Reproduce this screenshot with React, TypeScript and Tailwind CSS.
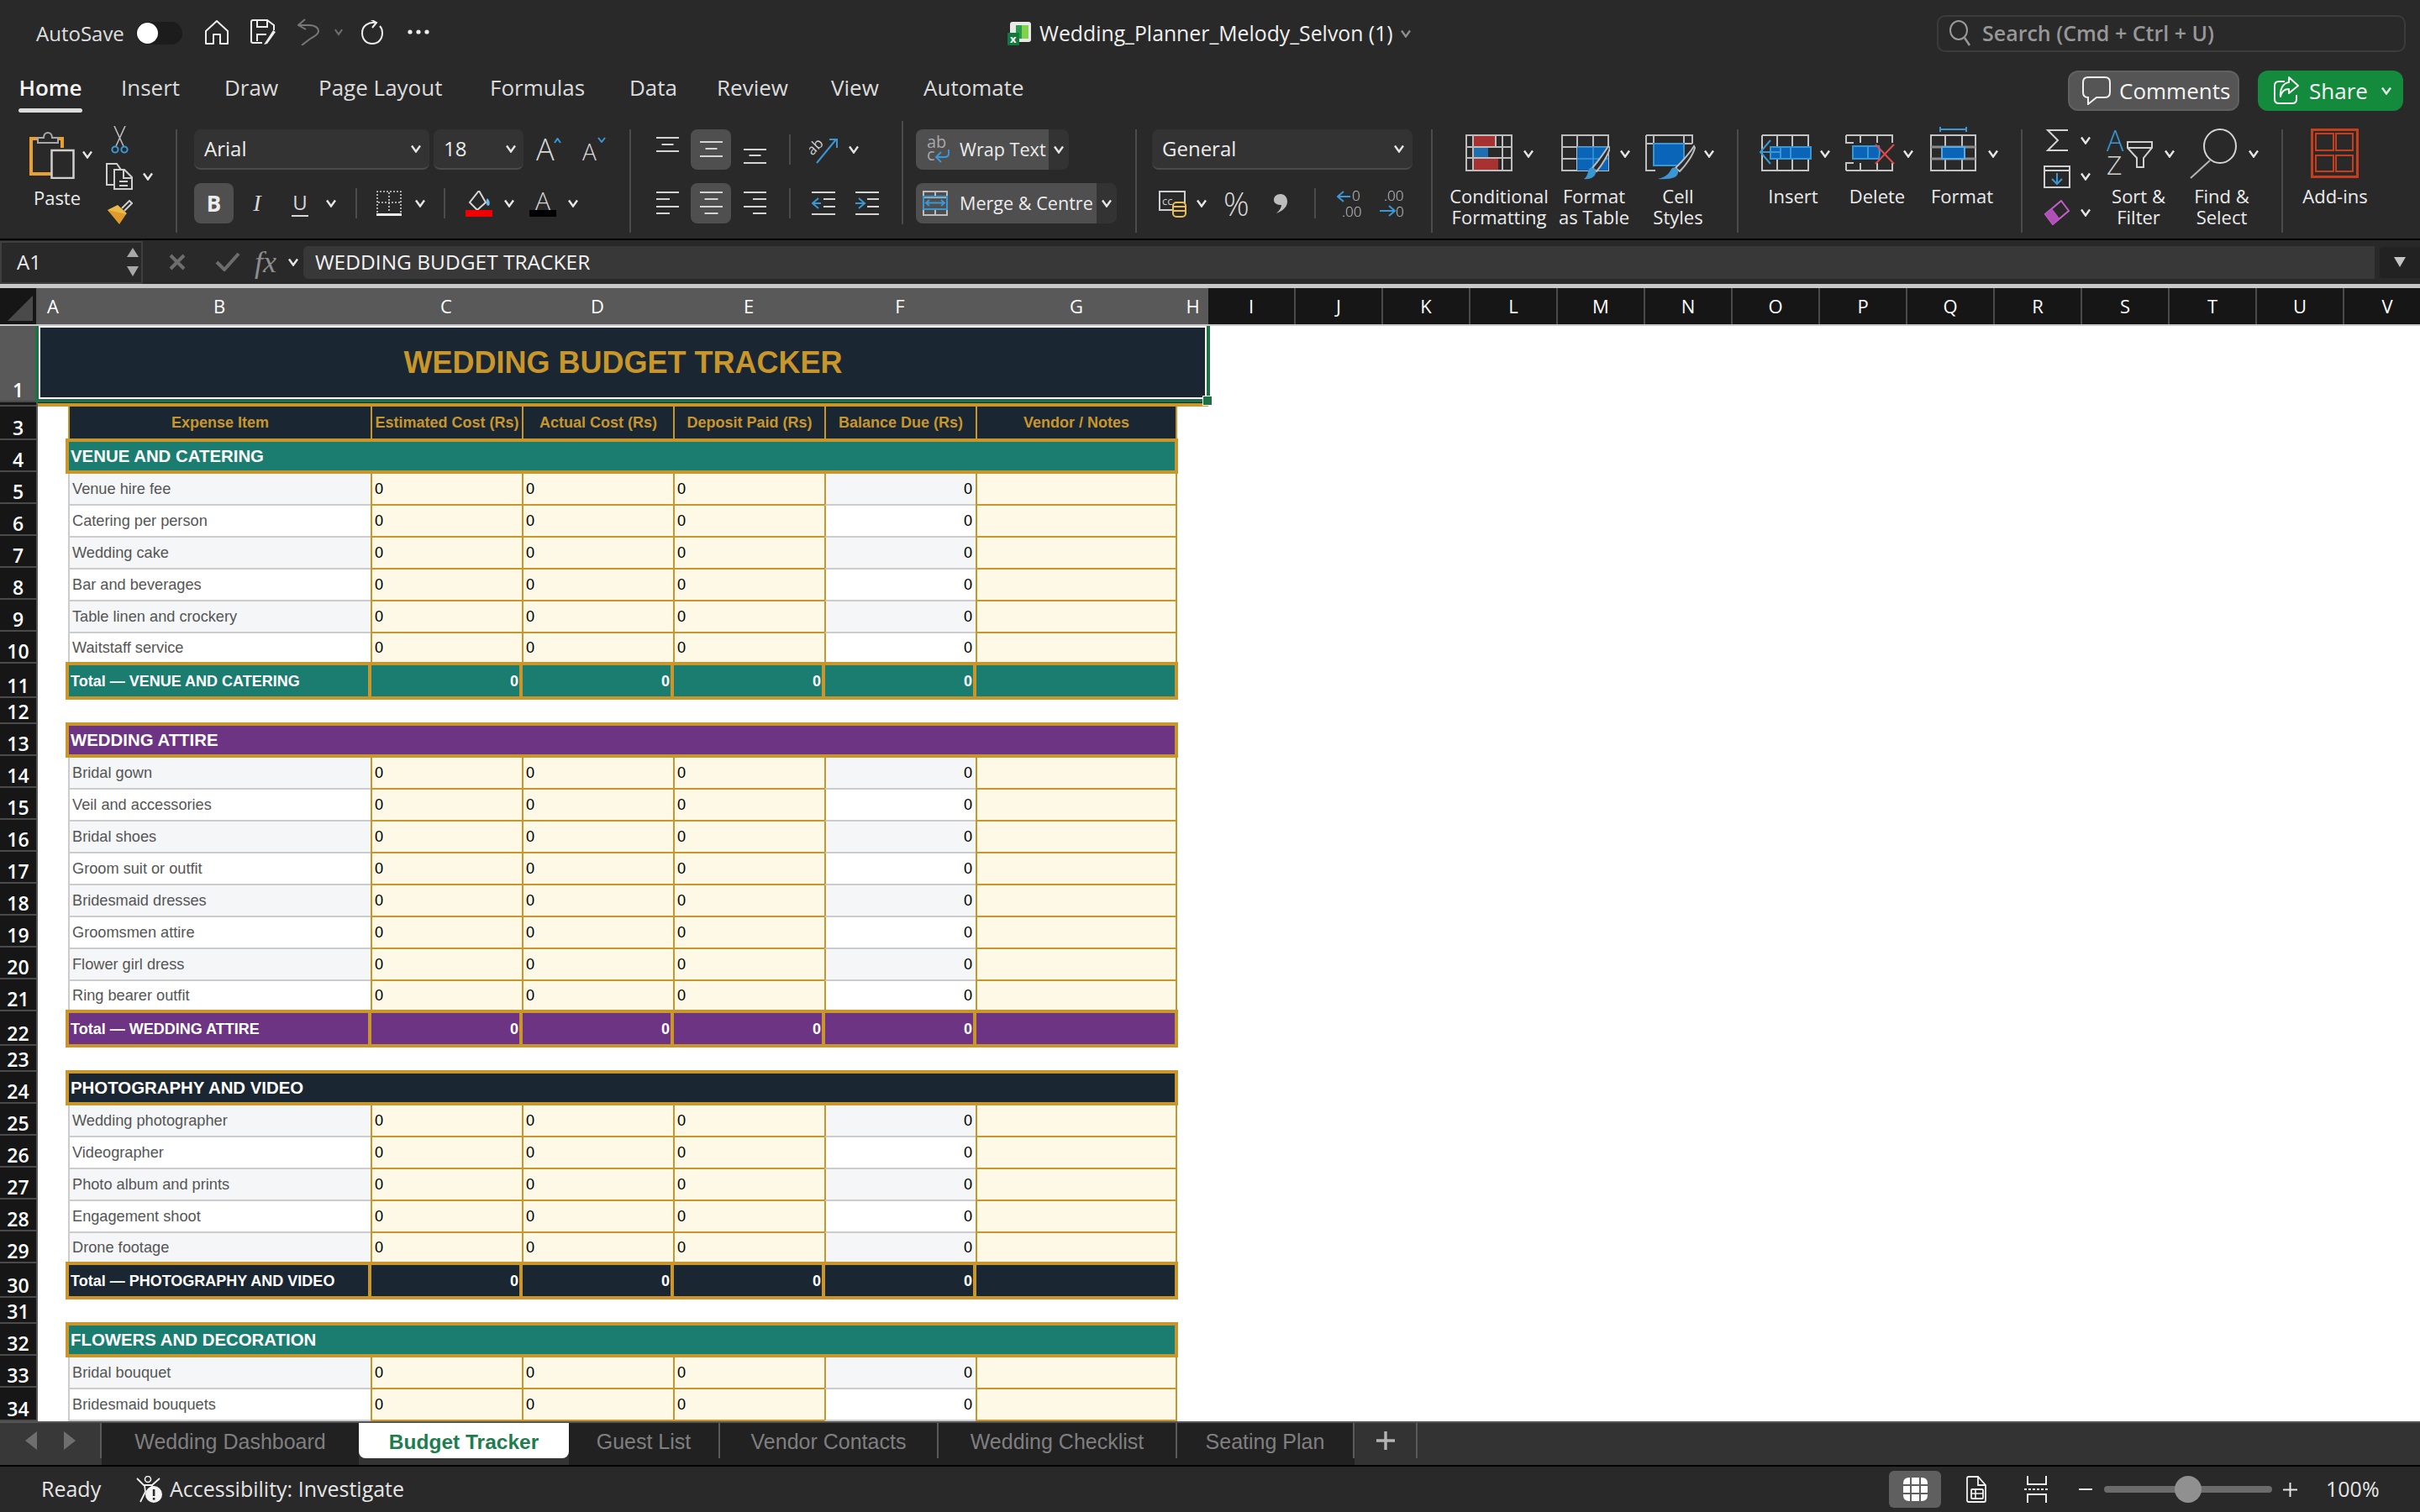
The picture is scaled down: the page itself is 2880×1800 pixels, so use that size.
import React from "react";

function Chev({ className = "", color = "#e6e6e6" }: { className?: string; color?: string }) {
  return (
    <svg width="12" height="10" viewBox="0 0 12 10" className={"shrink-0 " + className}>
      <path d="M1 1.5 L6 8.5 L11 1.5" fill="none" stroke={color} strokeWidth="2.4" />
    </svg>
  );
}

function Sep({ className = "" }: { className?: string }) {
  return <div className={"w-[2px] shrink-0 bg-[#4b4b4b] " + className} />;
}

function SmallSep({ className = "" }: { className?: string }) {
  return <div className={"w-[2px] h-[36px] shrink-0 bg-[#4b4b4b] " + className} />;
}

function Lines({ ys, lens, align }: { ys: number[]; lens: number[]; align: "l" | "c" | "r" }) {
  return (
    <svg width="27" height="48" viewBox="0 0 27 48" className="shrink-0">
      {ys.map((y, i) => {
        const x = align === "l" ? 0 : align === "r" ? 27 - lens[i] : (27 - lens[i]) / 2;
        return <rect key={i} x={x} y={y} width={lens[i]} height="2" fill="#d4d4d4" />;
      })}
    </svg>
  );
}

function Big({
  width,
  margin,
  offset,
  icon,
  chev,
  lines,
}: {
  width: string;
  margin: string;
  offset: string;
  icon: React.ReactNode;
  chev?: string;
  lines: string[];
}) {
  return (
    <div className={"shrink-0 flex flex-col " + width + " " + margin}>
      <div className={"flex items-center h-[66px] mt-[6px] " + offset}>
        {icon}
        {chev ? <Chev className={chev} /> : null}
      </div>
      <div className="mt-[5px] text-center text-[22px] leading-[25px] text-[#ececec]">
        {lines.map((l) => (
          <div key={l}>{l}</div>
        ))}
      </div>
    </div>
  );
}

function Icon({ w, children, h = 66 }: { w: number; h?: number; children: React.ReactNode }) {
  return (
    <svg width={w} height={h} viewBox={`0 0 ${w} ${h}`} className="shrink-0" fill="none">
      {children}
    </svg>
  );
}

const ic = {
  cf: (
    <Icon w={56}>
      <rect x="9" y="11" width="27" height="14" fill="#a83232" />
      <rect x="9" y="25" width="18" height="13" fill="#1f6fb0" />
      <rect x="9" y="38" width="30" height="15" fill="#a83232" />
      <path d="M1 11H55V53H1ZM9 11V53M36 11V25M44 11V53M1 25H55M1 38H55" stroke="#bdbdbd" strokeWidth="2" />
    </Icon>
  ),
  fat: (
    <Icon w={58}>
      <path d="M1 11H56V53H1ZM19 11V53M38 11V53M1 25H56M1 39H56" stroke="#bdbdbd" strokeWidth="2" />
      <rect x="19" y="25" width="37" height="28" fill="#0a64b8" />
      <path d="M19 25H56M38 25V53M19 39H56" stroke="#3b97d3" strokeWidth="1.5" />
      <path d="M56 24 C50 34 42 44 37 50 L42 54 C49 46 56 34 58 26 Z" fill="#2b2b2b" stroke="#bdbdbd" strokeWidth="2" />
      <path d="M34 50 C38 48 42 52 41 56 C40 61 34 64 27 63 C32 60 31 54 34 50 Z" fill="#3b97d3" />
    </Icon>
  ),
  cs: (
    <Icon w={60}>
      <path d="M1 11H56V21M1 11V53H12M1 21H56M10 11V21M46 11V21" stroke="#bdbdbd" strokeWidth="2" />
      <rect x="10" y="21" width="36" height="26" fill="#0a64b8" stroke="#3b97d3" strokeWidth="2" />
      <path d="M58 24 C52 34 42 44 36 50 L41 54 C49 46 57 34 59 26 Z" fill="#2b2b2b" stroke="#bdbdbd" strokeWidth="2" />
      <path d="M32 50 C36 48 40 52 39 56 C38 61 32 64 15 63 C28 60 29 54 32 50 Z" fill="#3b97d3" />
    </Icon>
  ),
  insert: (
    <Icon w={63}>
      <path d="M4 11H59V24M4 11V53H59V39M22 11V53M40 11V53" stroke="#c4c4c4" strokeWidth="2" />
      <rect x="14" y="25" width="48" height="14" fill="#0a64b8" stroke="#3b97d3" strokeWidth="2" />
      <path d="M38 25V39M26 25V39" stroke="#3b97d3" strokeWidth="2" />
      <path d="M14 17 L2 31 L14 45M2 31H27" stroke="#3b97d3" strokeWidth="2" />
    </Icon>
  ),
  del: (
    <Icon w={59}>
      <path d="M1 11H56V20M1 11V20H10M1 53V44H10M1 53H56V44M18 11V20M38 11V20M18 44V53M38 44V53" stroke="#c4c4c4" strokeWidth="2" />
      <path d="M9 24H40L41 31L40 39H9Z" fill="#0a64b8" stroke="#3b97d3" strokeWidth="2" />
      <path d="M27 24V39" stroke="#3b97d3" strokeWidth="2" />
      <path d="M36 22 L58 45 M58 22 L36 45" stroke="#e04b4b" strokeWidth="2" />
    </Icon>
  ),
  format: (
    <Icon w={55}>
      <path d="M12 4H43M12 1V7M43 1V7" stroke="#3b97d3" strokeWidth="2" />
      <path d="M1 11H54V53H1ZM18 11V53M38 11V53" stroke="#c4c4c4" strokeWidth="2" />
      <path d="M1 25H54M1 39H54" stroke="#8a8a8a" strokeWidth="3" />
      <rect x="14" y="25" width="27" height="14" fill="#0a64b8" stroke="#5aa9e0" strokeWidth="2" />
    </Icon>
  ),
  sort: (
    <Icon w={55}>
      <text x="0" y="30" fontSize="34" fontFamily="'Open Sans',sans-serif" fontWeight="300" fill="#3b97d3">A</text>
      <text x="0" y="58" fontSize="32" fontFamily="'Open Sans',sans-serif" fontWeight="300" fill="#d0d0d0">Z</text>
      <path d="M25 19H54V26L44 38V49H36V38L25 26Z" stroke="#d0d0d0" strokeWidth="2" />
      <path d="M25 26H54" stroke="#d0d0d0" strokeWidth="2" />
    </Icon>
  ),
  find: (
    <Icon w={57}>
      <ellipse cx="37" cy="24" rx="19" ry="20" stroke="#d4d4d4" strokeWidth="2" />
      <path d="M25 41 L2 62" stroke="#b5b5b5" strokeWidth="2" />
    </Icon>
  ),
  addins: (
    <Icon w={57}>
      <rect x="1.5" y="4.5" width="54" height="56" stroke="#c73e1d" strokeWidth="3" />
      <path d="M6 9H27V29H6ZM30 9H50V29H30ZM6 35H27V54H6ZM30 35H50V54H30Z" stroke="#c73e1d" strokeWidth="2" />
    </Icon>
  ),
};

const rowHeads: [string, string][] = [
  ["1", "h-[91px]"],
  ["", "h-[5px]"],
  ["3", "h-[40px]"],
  ["4", "h-[38px]"],
  ["5", "h-[38px]"],
  ["6", "h-[38px]"],
  ["7", "h-[38px]"],
  ["8", "h-[38px]"],
  ["9", "h-[38px]"],
  ["10", "h-[38px]"],
  ["11", "h-[41px]"],
  ["12", "h-[31px]"],
  ["13", "h-[38px]"],
  ["14", "h-[38px]"],
  ["15", "h-[38px]"],
  ["16", "h-[38px]"],
  ["17", "h-[38px]"],
  ["18", "h-[38px]"],
  ["19", "h-[38px]"],
  ["20", "h-[38px]"],
  ["21", "h-[38px]"],
  ["22", "h-[41px]"],
  ["23", "h-[31px]"],
  ["24", "h-[38px]"],
  ["25", "h-[38px]"],
  ["26", "h-[38px]"],
  ["27", "h-[38px]"],
  ["28", "h-[38px]"],
  ["29", "h-[38px]"],
  ["30", "h-[41px]"],
  ["31", "h-[31px]"],
  ["32", "h-[38px]"],
  ["33", "h-[38px]"],
  ["34", "h-[40px]"],
];

const columns: [string, string][] = [
  ["A", "w-[36px]"],
  ["B", "w-[360px]"],
  ["C", "w-[180px]"],
  ["D", "w-[180px]"],
  ["E", "w-[180px]"],
  ["F", "w-[180px]"],
  ["G", "w-[240px]"],
  ["H", "w-[37px]"],
];

const grayCols = ["I", "J", "K", "L", "M", "N", "O", "P", "Q", "R", "S", "T", "U", "V"];

const GRID = "grid grid-cols-[360px_180px_180px_180px_180px_240px] ml-[36px] w-[1320px]";

function DataRow({ label, alt, last }: { label: string; alt: boolean; last?: boolean }) {
  const bg = alt ? "bg-[#f4f6f7]" : "bg-white";
  const h = last ? "h-[34px]" : "h-[38px]";
  const bGray = last ? "" : "border-b-2 border-b-[#cccccc]";
  const bGold = last ? "" : "border-b-2 border-b-[#c8962a]";
  const num = "flex items-center pl-[3px] pt-[1px] bg-[#fef9e7] border-l-2 border-l-[#c8962a] text-black " + bGold;
  return (
    <div className={GRID + " " + h + " text-[18.2px] font-['Liberation_Sans',Arial,sans-serif]"}>
      <div className={"flex items-center pl-[3px] pt-[1px] border-l-2 border-l-[#cccccc] text-[#555555] " + bg + " " + bGray}>{label}</div>
      <div className={num}>0</div>
      <div className={num}>0</div>
      <div className={num}>0</div>
      <div className={"flex items-center justify-end pr-[4px] pt-[1px] border-l-2 border-l-[#c8962a] text-black " + bg + " " + bGray}>0</div>
      <div className={"bg-[#fef9e7] border-l-2 border-l-[#c8962a] border-r-2 border-r-[#c8962a] " + bGold} />
    </div>
  );
}

function Section({
  title,
  bg,
  items,
  gap,
  cut,
}: {
  title: string;
  bg: string;
  items: string[];
  gap?: boolean;
  cut?: boolean;
}) {
  return (
    <div className={gap ? "mt-[27px]" : ""}>
      <div
        className={
          "ml-[33px] w-[1324px] h-[42px] border-4 border-[#c8962a] flex items-center pl-[2px] text-white font-bold text-[20.4px] font-['Liberation_Sans',Arial,sans-serif] " +
          bg
        }
      >
        {title}
      </div>
      {items.map((it, i) => (
        <DataRow key={it} label={it} alt={i % 2 === 0} last={!cut && i === items.length - 1} />
      ))}
      {cut ? null : (
        <div className="ml-[33px] w-[1324px] h-[45px] grid grid-cols-[364px_180px_180px_180px_180px_240px] text-white font-bold text-[18px] font-['Liberation_Sans',Arial,sans-serif]">
          <div className={"flex items-center pl-[2px] pt-[1px] border-y-4 border-x-4 border-[#c8962a] " + bg}>Total — {title}</div>
          {[0, 1, 2, 3].map((k) => (
            <div key={k} className={"flex items-center justify-end pr-[1px] pt-[1px] border-y-4 border-r-4 border-[#c8962a] " + bg}>
              0
            </div>
          ))}
          <div className={"border-y-4 border-r-4 border-[#c8962a] " + bg} />
        </div>
      )}
    </div>
  );
}

export default function App() {
  return (
    <div className="w-[2880px] h-[1800px] overflow-hidden flex flex-col bg-[#292929] text-[#ececec] font-['Open_Sans',sans-serif]">
      {/* title bar */}
      <div className="h-[76px] shrink-0 flex items-center relative">
        <span className="ml-[43px] mt-[3px] text-[24px] w-[99px] whitespace-nowrap text-[#e0e0e0]">AutoSave</span>
        <div className="ml-[20px] mt-[2px] w-[55px] h-[27px] rounded-full bg-[#1c1c1c] flex items-center pl-[1px] shrink-0">
          <div className="w-[25px] h-[25px] rounded-full bg-white" />
        </div>
        <svg width="28" height="29" viewBox="0 0 28 29" fill="none" className="ml-[27px] shrink-0">
          <path d="M1 13 L14 1 L27 13 V28 H18 V17 H10 V28 H1 Z" stroke="#eeeeee" strokeWidth="2" strokeLinejoin="round" />
        </svg>
        <svg width="31" height="30" viewBox="0 0 31 30" fill="none" className="ml-[26px] shrink-0">
          <path d="M3 1 H20 L28 7 V13 M14 28 H3 Q1 28 1 26 V3 Q1 1 3 1 M8 1 V9 H20 V1" stroke="#eeeeee" strokeWidth="2" />
          <path d="M8 26 V18 H19" stroke="#eeeeee" strokeWidth="2" />
          <path d="M18 27 L16 30 L20 29 L30 15 L27 13 Z" fill="#eeeeee" />
        </svg>
        <svg width="26" height="32" viewBox="0 0 26 32" fill="none" className="ml-[25px] shrink-0">
          <path d="M9 1 L1 8 L10 13 M1 8 H14 C22 8 25 12 25 15 C25 20 18 22 14 25 L5 32" stroke="#787878" strokeWidth="2" />
        </svg>
        <Chev className="ml-[18px] w-[10px]" color="#6f6f6f" />
        <svg width="27" height="29" viewBox="0 0 27 29" fill="none" className="ml-[22px] shrink-0">
          <path d="M17 3 C8 2 1 7 1 15 C1 23 6 28 13 28 C20 28 25 23 25 15 C25 12 24 9 22 7" stroke="#eeeeee" strokeWidth="2" />
          <path d="M11 -1 L18 3 L13 9" stroke="#eeeeee" strokeWidth="2" />
        </svg>
        <svg width="26" height="6" viewBox="0 0 26 6" className="ml-[28px] shrink-0">
          <circle cx="3" cy="3" r="2.6" fill="#eeeeee" />
          <circle cx="13" cy="3" r="2.6" fill="#eeeeee" />
          <circle cx="23" cy="3" r="2.6" fill="#eeeeee" />
        </svg>
        {/* centre title */}
        <svg width="29" height="28" viewBox="0 0 29 28" className="ml-[688px] mt-[4px] shrink-0">
          <rect x="3" y="0" width="25" height="24" rx="3" fill="#e8e8e8" />
          <rect x="10" y="4" width="15" height="16" fill="#2a9a4a" />
          <rect x="17" y="4" width="8" height="16" fill="#7fd24a" />
          <rect x="0" y="13" width="14" height="15" rx="1" fill="#0f7a3c" />
          <text x="3" y="25" fontSize="13" fontWeight="700" fill="#ffffff" fontFamily="'Open Sans',sans-serif">x</text>
        </svg>
        <span className="ml-[9px] mt-[3px] text-[24.8px] whitespace-nowrap text-[#f0f0f0]">Wedding_Planner_Melody_Selvon (1)</span>
        <Chev className="ml-[9px] mt-[3px]" color="#8c8c8c" />
        <div className="ml-auto mr-[17px] mt-[4px] w-[558px] h-[44px] rounded-[10px] border-2 border-[#3b3b3b] flex items-center shrink-0">
          <svg width="28" height="32" viewBox="0 0 28 32" fill="none" className="ml-[12px] shrink-0">
            <ellipse cx="12" cy="12" rx="10" ry="11" stroke="#9a9a9a" strokeWidth="2" />
            <path d="M19 21 L25 30" stroke="#9a9a9a" strokeWidth="2.4" />
          </svg>
          <span className="ml-[12px] text-[25px] font-semibold text-[#979797] whitespace-nowrap">Search (Cmd + Ctrl + U)</span>
        </div>
      </div>

      {/* menu row */}
      <div className="h-[68px] shrink-0 flex items-start relative text-[26px] text-[#dcdcdc]">
        <div className="ml-[22px] mt-[9px] w-[76px] flex flex-col items-center">
          <span className="font-semibold text-[#f4f4f4]">Home</span>
          <div className="w-[76px] h-[5px] rounded-full bg-[#dcdcdc] mt-[5px]" />
        </div>
        <span className="ml-[46px] mt-[9px] w-[76px]">Insert</span>
        <span className="ml-[47px] mt-[9px] w-[68px]">Draw</span>
        <span className="ml-[44px] mt-[9px] w-[156px] whitespace-nowrap">Page Layout</span>
        <span className="ml-[48px] mt-[9px] w-[120px]">Formulas</span>
        <span className="ml-[46px] mt-[9px] w-[60px]">Data</span>
        <span className="ml-[44px] mt-[9px] w-[92px]">Review</span>
        <span className="ml-[44px] mt-[9px] w-[64px]">View</span>
        <span className="ml-[46px] mt-[9px] w-[124px]">Automate</span>
        <div className="ml-[1238px] mt-[8px] w-[204px] h-[48px] rounded-[12px] bg-[#555555] border-2 border-[#606060] flex items-center shrink-0">
          <svg width="34" height="34" viewBox="0 0 34 34" fill="none" className="ml-[15px] shrink-0">
            <path d="M7 1 H27 Q33 1 33 7 V19 Q33 25 27 25 H17 L7 33 V25 Q1 25 1 19 V7 Q1 1 7 1 Z" stroke="#f0f0f0" strokeWidth="2" />
          </svg>
          <span className="ml-[10px] text-[#f4f4f4]">Comments</span>
        </div>
        <div className="ml-[22px] mt-[8px] w-[173px] h-[48px] rounded-[12px] bg-[#148a3c] flex items-center shrink-0">
          <svg width="30" height="34" viewBox="0 0 30 34" fill="none" className="ml-[19px] shrink-0">
            <path d="M13 6 H6 Q1 6 1 11 V27 Q1 32 6 32 H22 Q27 32 27 27 V22" stroke="#f4f4f4" strokeWidth="2" />
            <path d="M18 1 L29 11 L18 20 V15 C12 15 9 19 8 24 C7 15 11 8 18 7 Z" stroke="#f4f4f4" strokeWidth="2" strokeLinejoin="round" />
          </svg>
          <span className="ml-[12px] text-[#f8f8f8]">Share</span>
          <Chev className="ml-[14px] w-[16px]" />
        </div>
      </div>

      {/* ribbon */}
      <div className="h-[140px] shrink-0 flex items-start">
        {/* clipboard */}
        <div className="w-[209px] shrink-0 flex">
          <div className="w-[126px] shrink-0 flex flex-col">
            <div className="flex items-center mt-[10px] ml-[35px] h-[59px]">
              <svg width="54" height="59" viewBox="0 0 54 59" fill="none" className="shrink-0">
                <path d="M9 11 H2 V53 H26 M35 11 H39 V22" stroke="#e8a030" strokeWidth="4" />
                <path d="M10 16 V10 H17 C17 2 27 2 27 10 H34 V16 Z" stroke="#a8a8a8" strokeWidth="2" />
                <rect x="26.5" y="25" width="26" height="33" stroke="#cfcfcf" strokeWidth="2.5" />
              </svg>
              <Chev className="ml-[9px]" />
            </div>
            <div className="mt-[9px] text-center text-[22px] leading-[26px] w-[136px] text-[#ececec]">Paste</div>
          </div>
          <div className="flex flex-col">
            <svg width="21" height="33" viewBox="0 0 21 33" fill="none" className="mt-[6px] ml-[6px] shrink-0">
              <path d="M4 0 L15 24 M17 0 L6 24" stroke="#bcbcbc" strokeWidth="1.6" />
              <circle cx="5" cy="28" r="3.6" stroke="#3b97d3" strokeWidth="2" />
              <circle cx="16" cy="28" r="3.6" stroke="#3b97d3" strokeWidth="2" />
            </svg>
            <div className="flex items-center mt-[11px]">
              <svg width="32" height="32" viewBox="0 0 32 32" fill="none" className="shrink-0">
                <path d="M10 26 H1 V1 H13 L18 8" stroke="#cfcfcf" strokeWidth="2" />
                <path d="M10 8 H22 L31 17 V31 H10 Z M21 8 V18 H31 M16 22 H26 M16 27 H26" stroke="#cfcfcf" strokeWidth="2" />
              </svg>
              <Chev className="ml-[12px]" />
            </div>
            <svg width="31" height="29" viewBox="0 0 31 29" fill="none" className="mt-[12px] ml-[1px] shrink-0">
              <path d="M18 10 L27 1 L30 4 L21 13" stroke="#cfcfcf" strokeWidth="2" />
              <path d="M13 6 L24 16 L14 24 L1 12 Z" fill="#e9b949" />
              <path d="M1 12 L15 29 L23 17 Z" fill="#e09a2c" />
            </svg>
          </div>
        </div>
        <Sep className="h-[123px] mt-[10px]" />

        {/* font */}
        <div className="w-[538px] shrink-0 flex flex-col pt-[10px] gap-[16px]">
          <div className="flex items-center h-[48px]">
            <div className="ml-[20px] w-[280px] h-[48px] rounded-[8px] bg-[#333333] border-b-2 border-[#4b4b4b] flex items-center pl-[12px] pr-[10px] justify-between text-[24px] shrink-0">
              <span>Arial</span>
              <Chev />
            </div>
            <div className="ml-[5px] w-[107px] h-[48px] rounded-[8px] bg-[#333333] border-b-2 border-[#4b4b4b] flex items-center pl-[12px] pr-[9px] justify-between text-[24px] shrink-0">
              <span>18</span>
              <Chev />
            </div>
            <div className="ml-[15px] w-[32px] flex items-start shrink-0">
              <span className="text-[36px] leading-[40px] font-light text-[#d8d8d8]">A</span>
              <svg width="9" height="7" viewBox="0 0 9 7" className="-ml-[1px] mt-[6px] shrink-0">
                <path d="M1 6 L4.5 1 L8 6" fill="none" stroke="#3b97d3" strokeWidth="2" />
              </svg>
            </div>
            <div className="ml-[23px] w-[30px] flex items-start shrink-0">
              <span className="text-[28px] leading-[40px] font-light text-[#d8d8d8] mt-[3px]">A</span>
              <svg width="10" height="7" viewBox="0 0 10 7" className="ml-[1px] mt-[6px] shrink-0">
                <path d="M1 1 L5 6 L9 1" fill="none" stroke="#3b97d3" strokeWidth="2" />
              </svg>
            </div>
          </div>
          <div className="flex items-center h-[48px]">
            <div className="ml-[20px] w-[47px] h-[48px] rounded-[8px] bg-[#4f4f4f] flex items-center justify-center text-[26px] font-bold shrink-0">B</div>
            <span className="ml-[21px] w-[14px] text-center text-[28px] italic text-[#d8d8d8] font-['Liberation_Serif',serif]">I</span>
            <span className="ml-[34px] w-[20px] text-center text-[24px] leading-[30px] text-[#d8d8d8] border-b-2 border-[#d8d8d8]">U</span>
            <Chev className="ml-[21px]" />
            <SmallSep className="ml-[23px]" />
            <svg width="30" height="30" viewBox="0 0 30 30" fill="none" className="ml-[23px] shrink-0">
              <path d="M1 26 V1 H29 V26 M15 2 V26 M2 14 H28" stroke="#d0d0d0" strokeWidth="1.6" strokeDasharray="2 2" />
              <rect x="0" y="27" width="30" height="3" fill="#f0f0f0" />
            </svg>
            <Chev className="ml-[16px]" />
            <SmallSep className="ml-[22px]" />
            <div className="ml-[24px] w-[32px] flex flex-col shrink-0">
              <svg width="32" height="23" viewBox="0 0 32 23" fill="none">
                <path d="M16 0 L5 14 L14 23 L24 14 Z" stroke="#d8d8d8" strokeWidth="2" />
                <path d="M26 9 C23 13 25 18 27 18 C29 18 30 13 26 9Z" fill="#6fb7e8" />
              </svg>
              <div className="h-[8px] bg-[#f00000]" />
            </div>
            <Chev className="ml-[14px]" />
            <div className="ml-[18px] w-[32px] flex flex-col items-center shrink-0">
              <span className="text-[30px] leading-[23px] font-light text-[#d8d8d8]">A</span>
              <div className="w-[32px] h-[8px] bg-black" />
            </div>
            <Chev className="ml-[14px]" />
          </div>
        </div>
        <Sep className="h-[123px] mt-[10px]" />

        {/* alignment */}
        <div className="w-[322px] shrink-0 flex flex-col pt-[10px] gap-[16px]">
          <div className="flex items-center h-[48px]">
            <div className="ml-[30px] shrink-0">
              <Lines ys={[9, 17, 25]} lens={[27, 14, 27]} align="c" />
            </div>
            <div className="ml-[14px] w-[48px] h-[48px] rounded-[8px] bg-[#4f4f4f] flex items-center justify-center shrink-0">
              <Lines ys={[14, 22, 31]} lens={[27, 14, 27]} align="c" />
            </div>
            <div className="ml-[15px] shrink-0">
              <Lines ys={[23, 30, 39]} lens={[27, 14, 27]} align="c" />
            </div>
            <SmallSep className="ml-[27px]" />
            <svg width="34" height="34" viewBox="0 0 34 34" fill="none" className="ml-[22px] shrink-0">
              <text x="0" y="14" fontSize="17" fontFamily="'Open Sans',sans-serif" fill="#cfcfcf" transform="rotate(-45 8 12) translate(-4 4)">ab</text>
              <path d="M9 33 L32 5 M24 5 H33 V15" stroke="#3b97d3" strokeWidth="2" />
            </svg>
            <Chev className="ml-[13px]" />
          </div>
          <div className="flex items-center h-[48px]">
            <div className="ml-[30px] shrink-0">
              <Lines ys={[10, 18, 27, 35]} lens={[27, 16, 27, 16]} align="l" />
            </div>
            <div className="ml-[14px] w-[48px] h-[48px] rounded-[8px] bg-[#4f4f4f] flex items-center justify-center shrink-0">
              <Lines ys={[10, 18, 27, 35]} lens={[27, 16, 27, 16]} align="c" />
            </div>
            <div className="ml-[15px] shrink-0">
              <Lines ys={[10, 18, 27, 35]} lens={[27, 16, 27, 16]} align="r" />
            </div>
            <SmallSep className="ml-[27px]" />
            <svg width="28" height="28" viewBox="0 0 28 28" fill="none" className="ml-[25px] shrink-0">
              <path d="M0 1 H28 M14 9 H28 M14 18 H28 M0 27 H28" stroke="#d4d4d4" strokeWidth="2" />
              <path d="M8 8 L1 14 L8 20 M1 14 H11" stroke="#3b97d3" strokeWidth="2" />
            </svg>
            <svg width="28" height="28" viewBox="0 0 28 28" fill="none" className="ml-[24px] shrink-0">
              <path d="M0 1 H28 M14 9 H28 M14 18 H28 M0 27 H28" stroke="#d4d4d4" strokeWidth="2" />
              <path d="M4 8 L11 14 L4 20 M0 14 H11" stroke="#3b97d3" strokeWidth="2" />
            </svg>
          </div>
        </div>
        <Sep className="h-[123px]" />

        {/* wrap / merge */}
        <div className="w-[276px] shrink-0 flex flex-col pt-[10px] gap-[16px] text-[21.6px]">
          <div className="ml-[15px] w-[182px] h-[48px] flex rounded-[8px] overflow-hidden">
            <div className="w-[158px] bg-[#4f4f4f] flex items-center">
              <svg width="30" height="34" viewBox="0 0 30 34" fill="none" className="ml-[12px] shrink-0">
                <text x="1" y="15" fontSize="20" fontFamily="'Open Sans',sans-serif" fill="#a8a8a8">ab</text>
                <text x="1" y="30" fontSize="20" fontFamily="'Open Sans',sans-serif" fill="#a8a8a8">c</text>
                <path d="M27 17 V22 Q27 26 22 26 H13 M18 20 L12 26 L18 32" stroke="#3b97d3" strokeWidth="2" />
              </svg>
              <span className="ml-[10px] whitespace-nowrap">Wrap Text</span>
            </div>
            <div className="w-[24px] bg-[#333333] flex items-center justify-center">
              <Chev />
            </div>
          </div>
          <div className="ml-[15px] w-[239px] h-[48px] flex rounded-[8px] overflow-hidden">
            <div className="w-[215px] bg-[#4f4f4f] flex items-center">
              <svg width="30" height="30" viewBox="0 0 30 30" fill="none" className="ml-[8px] shrink-0">
                <path d="M1 1 H29 V29 H1 Z M1 8 H29 M1 22 H29 M15 1 V8 M15 22 V29" stroke="#bdbdbd" strokeWidth="2" />
                <rect x="1" y="7" width="28" height="15" stroke="#3b97d3" strokeWidth="2" />
                <path d="M8 11 L4 14.5 L8 18 M22 11 L26 14.5 L22 18 M4 14.5 H26" stroke="#3b97d3" strokeWidth="2" />
              </svg>
              <span className="ml-[14px] whitespace-nowrap">Merge &amp; Centre</span>
            </div>
            <div className="w-[24px] bg-[#333333] flex items-center justify-center">
              <Chev />
            </div>
          </div>
        </div>
        <Sep className="h-[123px] mt-[10px]" />

        {/* number */}
        <div className="w-[350px] shrink-0 flex flex-col pt-[10px] gap-[16px]">
          <div className="ml-[18px] w-[310px] h-[48px] rounded-[8px] bg-[#333333] border-b-2 border-[#4b4b4b] flex items-center pl-[12px] pr-[10px] justify-between text-[24px]">
            <span>General</span>
            <Chev />
          </div>
          <div className="flex items-center h-[48px]">
            <svg width="33" height="34" viewBox="0 0 33 34" fill="none" className="ml-[26px] shrink-0">
              <rect x="1" y="3" width="30" height="22" stroke="#cfcfcf" strokeWidth="2" />
              <text x="4" y="19" fontSize="13" fontFamily="'Open Sans',sans-serif" fill="#cfcfcf">cc</text>
              <rect x="17" y="16" width="15" height="17" rx="4" fill="#292929" stroke="#e9bc55" strokeWidth="2" />
              <path d="M17 21 H32 M17 26 H32" stroke="#e9bc55" strokeWidth="2" />
            </svg>
            <Chev className="ml-[12px]" />
            <span className="ml-[20px] w-[30px] text-[38px] leading-[48px] font-light text-[#d8d8d8] tracking-[-2px]">%</span>
            <svg width="16" height="23" viewBox="0 0 16 23" className="ml-[30px] shrink-0">
              <path d="M8 0 C13 0 16 4 16 9 C16 15 11 20 3 23 C7 19 9 16 9 13 C4 13 0 11 0 7 C0 3 3 0 8 0 Z" fill="#bdbdbd" />
            </svg>
            <SmallSep className="ml-[32px]" />
            <svg width="29" height="34" viewBox="0 0 29 34" fill="none" className="ml-[25px] shrink-0">
              <text x="18" y="14" fontSize="17" fontFamily="'Open Sans',sans-serif" fontWeight="300" fill="#cfcfcf">0</text>
              <text x="6" y="33" fontSize="17" fontFamily="'Open Sans',sans-serif" fontWeight="300" fill="#cfcfcf">.00</text>
              <path d="M8 3 L1 9 L8 15 M1 9 H16" stroke="#3b97d3" strokeWidth="2" />
            </svg>
            <svg width="31" height="34" viewBox="0 0 31 34" fill="none" className="ml-[21px] shrink-0">
              <text x="6" y="14" fontSize="17" fontFamily="'Open Sans',sans-serif" fontWeight="300" fill="#cfcfcf">.00</text>
              <text x="20" y="33" fontSize="17" fontFamily="'Open Sans',sans-serif" fontWeight="300" fill="#cfcfcf">0</text>
              <path d="M12 20 L19 26 L12 32 M1 26 H19" stroke="#3b97d3" strokeWidth="2" />
            </svg>
          </div>
        </div>
        <Sep className="h-[123px] mt-[10px]" />

        {/* styles */}
        <div className="w-[362px] shrink-0 flex">
          <Big width="w-[124px]" margin="ml-[17px]" offset="pl-[22px]" icon={ic.cf} chev="ml-[13px]" lines={["Conditional", "Formatting"]} />
          <Big width="w-[94px]" margin="ml-[4px]" offset="pl-[8px]" icon={ic.fat} chev="ml-[12px]" lines={["Format", "as Table"]} />
          <Big width="w-[94px]" margin="ml-[6px]" offset="pl-[8px]" icon={ic.cs} chev="ml-[10px]" lines={["Cell", "Styles"]} />
        </div>
        <Sep className="h-[123px] mt-[10px]" />

        {/* cells */}
        <div className="w-[336px] shrink-0 flex">
          <Big width="w-[88px]" margin="ml-[21px]" offset="pl-[3px]" icon={ic.insert} chev="ml-[10px]" lines={["Insert"]} />
          <Big width="w-[88px]" margin="ml-[12px]" offset="pl-[6px]" icon={ic.del} chev="ml-[10px]" lines={["Delete"]} />
          <Big width="w-[88px]" margin="ml-[13px]" offset="pl-[6px]" icon={ic.format} chev="ml-[14px]" lines={["Format"]} />
        </div>
        <Sep className="h-[123px] mt-[10px]" />

        {/* editing */}
        <div className="w-[308px] shrink-0 flex">
          <div className="ml-[25px] w-[56px] shrink-0 flex flex-col pt-[9px]">
            <div className="flex items-center h-[28px]">
              <svg width="32" height="28" viewBox="0 0 32 28" fill="none" className="shrink-0">
                <path d="M29 2 H5 L17 14 L5 26 H29" stroke="#d4d4d4" strokeWidth="2" />
              </svg>
              <Chev className="ml-[12px]" />
            </div>
            <div className="flex items-center h-[28px] mt-[15px]">
              <svg width="32" height="28" viewBox="0 0 32 28" fill="none" className="shrink-0">
                <rect x="1" y="2" width="30" height="25" stroke="#cfcfcf" strokeWidth="2" />
                <path d="M1 7 H31" stroke="#cfcfcf" strokeWidth="2" />
                <path d="M16 10 V23 M10 17 L16 23 L22 17" stroke="#3b97d3" strokeWidth="2" />
              </svg>
              <Chev className="ml-[12px]" />
            </div>
            <div className="flex items-center h-[30px] mt-[14px]">
              <svg width="32" height="30" viewBox="0 0 32 30" fill="none" className="shrink-0">
                <path d="M21 1 L30 13 L11 29 L2 17 Z" stroke="#c55fc9" strokeWidth="2" />
                <path d="M2 17 L11 29 L19 22 L10 10 Z" fill="#b04fb6" />
              </svg>
              <Chev className="ml-[12px]" />
            </div>
          </div>
          <Big width="w-[88px]" margin="ml-[13px]" offset="pl-[6px]" icon={ic.sort} chev="ml-[14px]" lines={["Sort &", "Filter"]} />
          <Big width="w-[88px]" margin="ml-[11px]" offset="pl-[5px]" icon={ic.find} chev="ml-[14px]" lines={["Find &", "Select"]} />
        </div>
        <Sep className="h-[123px] mt-[10px]" />

        <div className="shrink-0 flex">
          <Big width="w-[88px]" margin="ml-[18px]" offset="pl-[15px]" icon={ic.addins} lines={["Add-ins"]} />
        </div>
      </div>

      <div className="h-[2px] shrink-0 bg-black" />

      {/* formula bar */}
      <div className="h-[52px] shrink-0 flex items-center">
        <div className="w-[170px] h-[51px] shrink-0 border-2 border-[#3e3e3e] flex items-center relative">
          <span className="ml-[18px] text-[24px]">A1</span>
          <div className="ml-auto mr-[3px] flex flex-col gap-[11px]">
            <svg width="14" height="11" viewBox="0 0 14 11"><path d="M7 0 L14 11 H0 Z" fill="#a8a8a8" /></svg>
            <svg width="14" height="12" viewBox="0 0 14 12"><path d="M7 12 L14 0 H0 Z" fill="#a8a8a8" /></svg>
          </div>
        </div>
        <svg width="20" height="20" viewBox="0 0 20 20" fill="none" className="ml-[31px] shrink-0">
          <path d="M2 2 L18 18 M18 2 L2 18" stroke="#6d6d6d" strokeWidth="4" />
        </svg>
        <svg width="30" height="22" viewBox="0 0 30 22" fill="none" className="ml-[35px] shrink-0">
          <path d="M2 11 L11 20 L28 1" stroke="#6d6d6d" strokeWidth="4" />
        </svg>
        <span className="ml-[17px] w-[32px] text-[36px] leading-[40px] italic text-[#8d8d8d] font-['Liberation_Serif',serif]">fx</span>
        <Chev className="ml-[8px]" />
        <div className="ml-[6px] h-[39px] flex-1 rounded-l-[6px] bg-[#383838] flex items-center pl-[14px] text-[24.5px] text-[#f4f4f4] whitespace-nowrap">
          WEDDING BUDGET TRACKER
        </div>
        <div className="ml-[6px] w-[48px] h-[37px] shrink-0 bg-[#222222] rounded-l-[4px] flex items-center justify-center">
          <svg width="14" height="12" viewBox="0 0 14 12"><path d="M7 12 L14 0 H0 Z" fill="#c4c4c4" /></svg>
        </div>
      </div>

      <div className="h-[5px] shrink-0 bg-[#c8c8c8]" />

      {/* column header */}
      <div className="h-[43px] shrink-0 flex bg-[#161616] text-white text-[22px] overflow-hidden">
        <div className="w-[45px] shrink-0 border-r-2 border-[#555555] flex items-end justify-end pr-[4px] pb-[4px]">
          <svg width="30" height="30" viewBox="0 0 30 30"><path d="M30 0 V30 H0 Z" fill="#4a4a4a" /></svg>
        </div>
        <div className="flex bg-[#595959] shrink-0">
          {columns.map(([c, w]) => (
            <div key={c} className={"flex items-center justify-center pb-[1px] " + w}>{c}</div>
          ))}
        </div>
        {grayCols.map((c) => (
          <div key={c} className="w-[104px] shrink-0 flex items-center justify-center border-r-2 border-[#4a4a4a]">{c}</div>
        ))}
      </div>
      <div className="h-[2px] shrink-0 bg-[#c8c8c8]" />

      {/* sheet */}
      <div className="h-[1304px] shrink-0 flex bg-white overflow-hidden relative">
        <div className="w-[45px] shrink-0 flex flex-col bg-[#161616] border-r-2 border-[#555555] text-white text-[23px] font-semibold">
          {rowHeads.map(([n, h], i) => (
            <div
              key={i}
              className={
                "shrink-0 flex items-end justify-center leading-[26px] border-b-2 border-[#4a4a4a] overflow-hidden " +
                h +
                (i === 0 ? " bg-[#595959]" : "")
              }
            >
              {n}
            </div>
          ))}
        </div>
        <div className="flex-1 flex flex-col min-w-0">
          <div className="w-[1393px] h-[92px] shrink-0 bg-[#1a2733] flex items-center justify-center pb-[5px] text-[36px] font-bold text-[#c8962a] font-['Liberation_Sans',Arial,sans-serif]">
            WEDDING BUDGET TRACKER
          </div>
          <div className="w-[1393px] h-[4px] shrink-0 bg-[#c8962a]" />
          <div className={GRID + " h-[38px] shrink-0 bg-[#1a2733] text-[18px] font-bold text-[#c8962a] font-['Liberation_Sans',Arial,sans-serif]"}>
            {["Expense Item", "Estimated Cost (Rs)", "Actual Cost (Rs)", "Deposit Paid (Rs)", "Balance Due (Rs)", "Vendor / Notes"].map((t, i) => (
              <div
                key={t}
                className={
                  "flex items-center justify-center pt-[1px] whitespace-nowrap border-l-2 border-[#c8962a] " + (i === 5 ? "border-r-2" : "")
                }
              >
                {t}
              </div>
            ))}
          </div>
          <Section
            title="VENUE AND CATERING"
            bg="bg-[#1b7d6f]"
            items={["Venue hire fee", "Catering per person", "Wedding cake", "Bar and beverages", "Table linen and crockery", "Waitstaff service"]}
          />
          <Section
            gap
            title="WEDDING ATTIRE"
            bg="bg-[#6c3483]"
            items={["Bridal gown", "Veil and accessories", "Bridal shoes", "Groom suit or outfit", "Bridesmaid dresses", "Groomsmen attire", "Flower girl dress", "Ring bearer outfit"]}
          />
          <Section
            gap
            title="PHOTOGRAPHY AND VIDEO"
            bg="bg-[#1a2733]"
            items={["Wedding photographer", "Videographer", "Photo album and prints", "Engagement shoot", "Drone footage"]}
          />
          <Section gap cut title="FLOWERS AND DECORATION" bg="bg-[#1b7d6f]" items={["Bridal bouquet", "Bridesmaid bouquets"]} />
        </div>
        {/* selection outline */}
        <div className="absolute left-[42px] top-[-4px] w-[1398px] h-[95px] border-4 border-[#1e7145]">
          <div className="w-full h-full border-2 border-white" />
          <div className="absolute right-[-7px] bottom-[-8px] w-[12px] h-[12px] bg-[#1e7145] border border-white" />
        </div>
      </div>

      {/* sheet tabs */}
      <div className="h-[52px] shrink-0 flex bg-[#333333] border-t-2 border-[#555555] text-[25px] text-[#7f7f7f] font-['Liberation_Sans',Arial,sans-serif]">
        <div className="w-[121px] shrink-0 flex items-start bg-[#383838]">
          <div className="w-[121px] h-[42px] flex items-center border-r-2 border-[#5a5a5a]">
            <svg width="14" height="22" viewBox="0 0 14 22" className="ml-[30px] shrink-0"><path d="M14 0 V22 L0 11 Z" fill="#6e6e6e" /></svg>
            <svg width="14" height="22" viewBox="0 0 14 22" className="ml-[32px] shrink-0"><path d="M0 0 V22 L14 11 Z" fill="#6e6e6e" /></svg>
          </div>
        </div>
        <div className="w-[306px] shrink-0 bg-[#212121]">
          <div className="h-[42px] pt-[4px] flex items-center justify-center">Wedding Dashboard</div>
        </div>
        <div className="w-[250px] shrink-0 bg-[#333333]">
          <div className="h-[42px] pt-[4px] rounded-b-[8px] bg-white flex items-center justify-center font-bold text-[24.5px] text-[#1e7d4e]">Budget Tracker</div>
        </div>
        <div className="w-[180px] shrink-0 bg-[#212121]">
          <div className="h-[42px] pt-[4px] flex items-center justify-center border-r-2 border-[#5a5a5a]">Guest List</div>
        </div>
        <div className="w-[260px] shrink-0 bg-[#212121]">
          <div className="h-[42px] pt-[4px] flex items-center justify-center border-r-2 border-[#5a5a5a]">Vendor Contacts</div>
        </div>
        <div className="w-[284px] shrink-0 bg-[#212121]">
          <div className="h-[42px] pt-[4px] flex items-center justify-center border-r-2 border-[#5a5a5a]">Wedding Checklist</div>
        </div>
        <div className="w-[211px] shrink-0 bg-[#212121]">
          <div className="h-[42px] pt-[4px] flex items-center justify-center border-r-2 border-[#5a5a5a]">Seating Plan</div>
        </div>
        <div className="w-[75px] h-[42px] shrink-0 flex items-center justify-center border-r-2 border-[#5a5a5a]">
          <svg width="22" height="22" viewBox="0 0 22 22"><path d="M11 0 V22 M0 11 H22" stroke="#b4b4b4" strokeWidth="3.4" /></svg>
        </div>
      </div>

      <div className="h-[2px] shrink-0 bg-black" />

      {/* status bar */}
      <div className="h-[54px] shrink-0 flex items-center text-[25px] text-[#e6e6e6]">
        <span className="ml-[49px] w-[72px]">Ready</span>
        <svg width="31" height="32" viewBox="0 0 31 32" fill="none" className="ml-[41px] shrink-0">
          <circle cx="14" cy="4" r="3.5" stroke="#f0f0f0" strokeWidth="1.6" />
          <path d="M1 3 L9 11 H19 L28 3 M10 11 L11 19 L5 31 M19 11 V16" stroke="#f0f0f0" strokeWidth="1.8" />
          <circle cx="21" cy="22" r="10" fill="#f4f4f4" />
          <rect x="19.8" y="16" width="2.6" height="8" fill="#292929" />
          <rect x="19.8" y="26" width="2.6" height="2.6" fill="#292929" />
        </svg>
        <span className="ml-[9px] w-[284px] whitespace-nowrap">Accessibility: Investigate</span>
        <div className="ml-[1762px] w-[62px] h-[44px] shrink-0 rounded-[6px] bg-[#5f5f5f] flex items-center justify-center">
          <svg width="29" height="28" viewBox="0 0 29 28">
            <path d="M7 0 H8 V8 H0 V7 Q0 0 7 0Z M10 0 H19 V8 H10Z M21 0 H22 Q29 0 29 7 V8 H21Z M0 10 H8 V18 H0Z M10 10 H19 V18 H10Z M21 10 H29 V18 H21Z M0 20 H8 V28 H7 Q0 28 0 21Z M10 20 H19 V28 H10Z M21 20 H29 V21 Q29 28 22 28 H21Z" fill="#ffffff" />
          </svg>
        </div>
        <svg width="24" height="32" viewBox="0 0 24 32" fill="none" className="ml-[30px] shrink-0">
          <path d="M3 1 H14 L23 11 V29 Q23 31 21 31 H3 Q1 31 1 29 V3 Q1 1 3 1 Z M14 1 V11 H23" stroke="#f0f0f0" strokeWidth="1.8" />
          <rect x="6" y="16" width="14" height="11" rx="1" stroke="#f0f0f0" strokeWidth="1.8" />
          <path d="M6 21 H20 M11 16 V27" stroke="#f0f0f0" strokeWidth="1.6" />
        </svg>
        <svg width="30" height="32" viewBox="0 0 30 32" fill="none" className="ml-[45px] shrink-0">
          <path d="M4 0 V10 H26 V0 M4 32 V22 H26 V32" stroke="#f0f0f0" strokeWidth="2" />
          <path d="M0 16 H30" stroke="#f0f0f0" strokeWidth="2" strokeDasharray="3 2" />
        </svg>
        <div className="ml-[35px] w-[16px] h-[2px] shrink-0 bg-[#e6e6e6]" />
        <div className="ml-[14px] w-[200px] h-[8px] shrink-0 rounded-full bg-[#6b6b6b] flex items-center">
          <div className="ml-[84px] w-[32px] h-[32px] shrink-0 rounded-full bg-[#909090]" />
        </div>
        <svg width="17" height="17" viewBox="0 0 17 17" className="ml-[13px] shrink-0"><path d="M8.5 0 V17 M0 8.5 H17" stroke="#e6e6e6" strokeWidth="2" /></svg>
        <span className="ml-[34px] whitespace-nowrap">100%</span>
      </div>
    </div>
  );
}
